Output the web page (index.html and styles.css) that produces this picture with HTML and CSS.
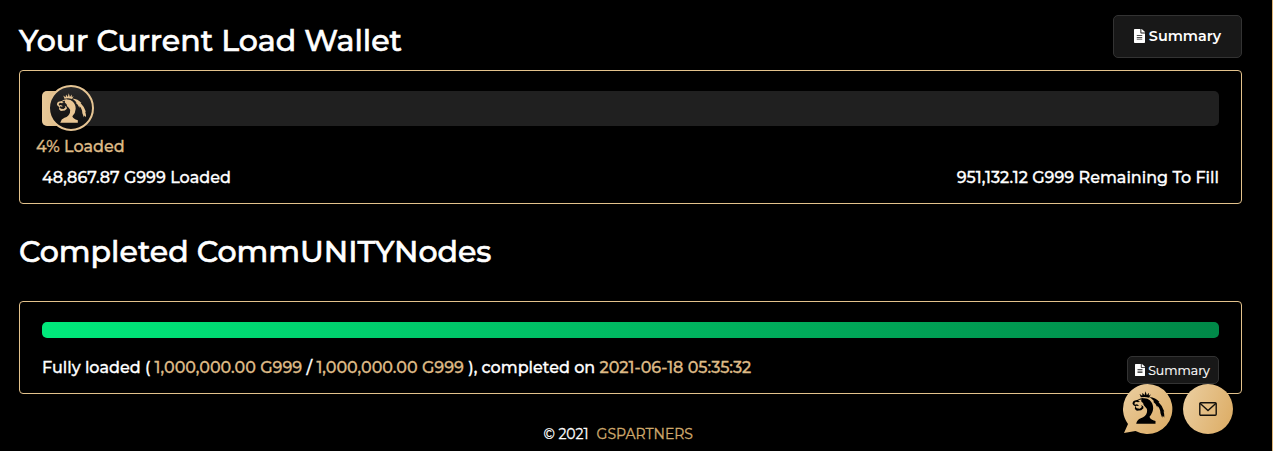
FILE: index.html
```
<!DOCTYPE html>
<html lang="en">
    <head>
        <meta charset="utf-8">
        <title>GSPartners</title>
        <link rel="stylesheet" href="styles.css">
    </head>
    <body>
        <svg class="sprite">
            <symbol id="lion" viewBox="8 8 99 99">
                <path d="M32 16l8 6 1-9 6 8 3-12 4 12 6-8v9l6-4-5 10q-12-4-25-1z"/>
                <path d="M11 46q0-7 5-9l11-3q9-6 19-5l-5 4q-10 0-14 5l7 1-6 3-7-2-4 4 1 5 6-1 6 3-2 2-6-1-2 3 4 5 9 1 6-5-2-6 6 4 1 6-7 6-13 1-6-5 1-8-5-3z"/>
                <path d="M38 31q15-4 25 5 10 9 10 24 0 13-11 25 2 9 18 13v8H22q3-12 14-16 15-6 18-17 3-10-4-16-7-5-7-12l-6-6z"/>
                <path d="M62 26q18 1 30 15l-3 0q12 11 18 30l-3-2q4 11 3 19l-5-6-2 6-5-13q-1-17-10-23l1 6q-6-14-13-18l3-1q-6-7-14-13z"/>
            </symbol>
            <symbol id="file" viewBox="0 0 384 512" preserveAspectRatio="none">
                <path d="M224 136V0H24C11 0 0 11 0 24v464c0 13 11 24 24 24h336c13 0 24-11 24-24V160H248c-13 0-24-11-24-24zm64 236c0 7-5 12-12 12H108c-7 0-12-5-12-12v-8c0-7 5-12 12-12h168c7 0 12 5 12 12v8zm0-64c0 7-5 12-12 12H108c-7 0-12-5-12-12v-8c0-7 5-12 12-12h168c7 0 12 5 12 12v8zm0-72v8c0 7-5 12-12 12H108c-7 0-12-5-12-12v-8c0-7 5-12 12-12h168c7 0 12 5 12 12zm96-114v6H256V0h6c6 0 12 3 17 7l98 98c4 5 7 11 7 17z"/>
            </symbol>
        </svg>

        <main class="content">
            <header class="page-head">
                <h1 class="title">Your Current Load Wallet</h1>
                <button class="btn"><svg class="btn-icon"><use href="#file"/></svg><span>Summary</span></button>
            </header>

            <section class="card wallet">
                <div class="load-bar">
                    <div class="load-fill"></div>
                    <div class="load-badge"><svg><use href="#lion"/></svg></div>
                </div>
                <div class="load-percent"><span>4% Loaded</span></div>
                <div class="load-info">
                    <span class="loaded">48,867.87 G999 Loaded</span>
                    <span class="remaining">951,132.12 G999 Remaining To Fill</span>
                </div>
            </section>

            <h2 class="title nodes-title">Completed CommUNITYNodes</h2>

            <section class="card node">
                <div class="node-bar"></div>
                <div class="node-info">
                    <p class="node-text">Fully loaded ( <b>1,000,000.00 G999</b> / <b>1,000,000.00 G999</b> ), completed on <b>2021-06-18 05:35:32</b></p>
                    <button class="btn btn-sm"><svg class="btn-icon"><use href="#file"/></svg><span>Summary</span></button>
                </div>
            </section>
        </main>

        <footer class="footer"><span class="year">© 2021</span><a class="brand">GSPARTNERS</a></footer>

        <div class="floating">
            <a class="bubble chat">
                <svg viewBox="0 0 51 50">
                    <defs>
                        <linearGradient id="gold" x1="0" y1="0" x2="1" y2="1">
                            <stop offset="0" stop-color="#ebcfa2"/>
                            <stop offset="1" stop-color="#dcab62"/>
                        </linearGradient>
                    </defs>
                    <path fill="url(#gold)" d="M25.5 0a25 25 0 1 1-12 47L2 49l4-9A25 25 0 0 1 25.5 0z"/>
                    <use href="#lion" x="9.5" y="7" width="33" height="33"/>
                </svg>
            </a>
            <a class="bubble mail">
                <svg viewBox="0 0 18 14"><rect x=".8" y=".8" width="16.4" height="12.4" rx="1"/><path d="M1 1.3l8 7.2 8-7.2"/></svg>
            </a>
        </div>
    </body>
</html>
```
FILE: styles.css
```
* {
    box-sizing: border-box;
}

body {
    margin: 0;
    height: 451px;
    overflow: hidden;
    background: #000;
    border-right: 1px solid #dcb477;
    color: #fff;
    font-family: Montserrat, Inter, sans-serif;
    font-size: 16px;
    font-weight: 500;
    -webkit-text-stroke: .3px;
}

.sprite {
    display: none;
}

.content {
    padding: 15px 30px 0 19px;
}

.page-head {
    display: flex;
    justify-content: space-between;
    height: 55px;
}

.title {
    margin: 0;
    padding-top: 7px;
    font-size: 30.05px;
    font-weight: 500;
    line-height: 38px;
    white-space: nowrap;
    -webkit-text-stroke: .6px;
}

.btn {
    display: flex;
    align-items: center;
    justify-content: center;
    gap: 4px;
    width: 129px;
    height: 43px;
    padding: 0 0 1px;
    background: #181818;
    border: 1px solid #333;
    border-radius: 5px;
    color: #fff;
    font: 600 14.4px Montserrat, Inter, sans-serif;
    -webkit-text-stroke: 0;
}

.btn-icon {
    width: 11px;
    height: 14px;
    fill: #fff;
}

.btn-sm {
    gap: 3px;
    width: 92px;
    height: 28px;
    padding: 0 1px 0 0;
    font-size: 12.5px;
    font-weight: 400;
    -webkit-text-stroke: .2px;
}

.btn-sm .btn-icon {
    width: 10px;
    height: 12px;
}

.card {
    border: 1px solid #e3c28c;
    border-radius: 4px;
    padding: 20px 22px 0;
}

.wallet {
    height: 134px;
}

.load-bar {
    position: relative;
    height: 35px;
    background: #202020;
    border-radius: 5px;
}

.load-fill {
    width: 2.5%;
    height: 100%;
    border-radius: 5px 0 0 5px;
    background: linear-gradient(90deg, #e8c999, #d4b07a);
}

.load-badge {
    position: absolute;
    top: -6px;
    left: 6px;
    display: flex;
    align-items: center;
    justify-content: center;
    width: 46px;
    height: 46px;
    border: 2px solid #e6c594;
    border-radius: 50%;
    background: linear-gradient(#292929, #0d0d0d);
}

.load-badge svg {
    width: 30px;
    height: 30px;
    fill: #e8c694;
}

.load-percent {
    margin: 11px 0 0 -6px;
    color: #deba86;
    line-height: 20px;
}

.load-info {
    display: flex;
    justify-content: space-between;
    margin-top: 11px;
    line-height: 20px;
}

.nodes-title {
    height: 97px;
    padding-top: 29px;
}

.node {
    height: 93px;
}

.node-bar {
    height: 16px;
    border-radius: 5px;
    background: linear-gradient(90deg, #00e97b, #008848);
}

.node-info {
    display: flex;
    justify-content: space-between;
    padding-top: 18px;
}

.node-text {
    margin: 0;
    padding-top: 2px;
    line-height: 20px;
    white-space: nowrap;
}

.node-text b {
    color: #deba86;
    font-weight: 500;
}

.footer {
    display: flex;
    gap: 8px;
    padding: 30px 0 0 543.4px;
    font-size: 14px;
    font-weight: 400;
    line-height: 20px;
}

.brand {
    color: #d0aa6d;
}

.floating {
    position: fixed;
    right: 40px;
    bottom: 17px;
    display: flex;
    gap: 10px;
}

.bubble {
    height: 50px;
}

.chat {
    width: 51px;
}

.chat svg {
    display: block;
    width: 51px;
    height: 50px;
}

.mail {
    display: flex;
    align-items: center;
    justify-content: center;
    width: 50px;
    border-radius: 50%;
    background: linear-gradient(110deg, #ebcfa2, #dcab62);
}

.mail svg {
    width: 18px;
    height: 14px;
    fill: none;
    stroke: #14110c;
    stroke-width: 1.4;
}
```
